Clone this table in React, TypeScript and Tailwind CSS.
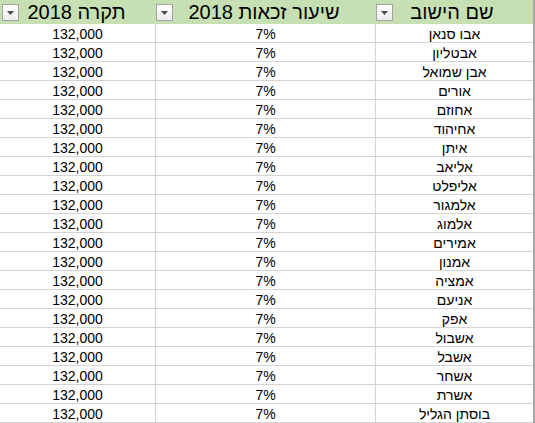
import React from "react";

const names = [
  "אבו סנאן",
  "אבטליון",
  "אבן שמואל",
  "אורים",
  "אחוזם",
  "אחיהוד",
  "איתן",
  "אליאב",
  "אליפלט",
  "אלמגור",
  "אלמוג",
  "אמירים",
  "אמנון",
  "אמציה",
  "אניעם",
  "אפק",
  "אשבול",
  "אשבל",
  "אשחר",
  "אשרת",
  "בוסתן הגליל",
];

function FilterButton({ left }: { left: string }) {
  return (
    <div
      className={`absolute top-[4px] ${left} w-[17px] h-[17px] border border-[#a3a3a3] bg-gradient-to-b from-white to-[#ececec] flex items-center justify-center`}
    >
      <svg width="7" height="4" viewBox="0 0 7 4">
        <polygon points="0,0 7,0 3.5,4" fill="#4a4a4a" />
      </svg>
    </div>
  );
}

export default function App() {
  return (
    <div
      dir="rtl"
      className="w-[535px] h-[423px] overflow-hidden bg-white text-black"
      style={{ fontFamily: '"Liberation Sans", Arial, sans-serif' }}
    >
      <div className="w-[535px] border-r-2 border-[#a8a8a8]">
        {/* header */}
        <div className="flex h-[24px] bg-[#c6e0b4] text-[20px] leading-[24px]">
          <div className="relative w-[158px] flex items-center justify-center pr-[4px]">
            <span>שם הישוב</span>
            <FilterButton left="left-[1px]" />
          </div>
          <div className="relative w-[220px] flex items-center justify-center pr-[2px]">
            <span>שיעור זכאות 2018</span>
            <FilterButton left="left-[1px]" />
          </div>
          <div className="relative w-[155px] flex items-center justify-center pr-[2px]">
            <span>תקרה 2018</span>
            <FilterButton left="left-[2px]" />
          </div>
        </div>
        {/* rows */}
        {names.map((n, i) => (
          <div
            key={i}
            className="flex h-[19px] border-b border-[#d4d4d4] text-[14px] leading-[16px]"
          >
            <div className="w-[158px] border-l border-[#d4d4d4] flex items-end justify-center">
              <span>{n}</span>
            </div>
            <div className="w-[220px] border-l border-[#d4d4d4] flex items-end justify-center">
              <span dir="ltr">7%</span>
            </div>
            <div className="w-[155px] flex items-end justify-center">
              <span dir="ltr">132,000</span>
            </div>
          </div>
        ))}
      </div>
    </div>
  );
}
